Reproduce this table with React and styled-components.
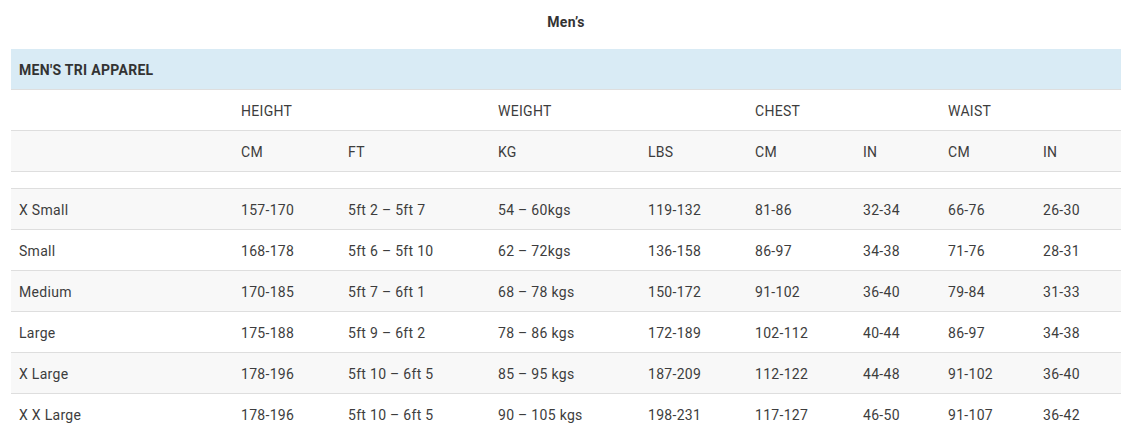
import React from "react";
import styled, { createGlobalStyle } from "styled-components";

const GlobalStyle = createGlobalStyle`
  body {
    margin: 0;
    background: #fff;
    font-family: Roboto, "Liberation Sans", sans-serif;
    color: #3a3a3a;
  }
`;

const columns = [222, 107, 150, 150, 107, 108, 85, 95, 86];

const groups = [
  { label: "HEIGHT", span: 2 },
  { label: "WEIGHT", span: 2 },
  { label: "CHEST", span: 2 },
  { label: "WAIST", span: 2 },
];

const units = ["CM", "FT", "KG", "LBS", "CM", "IN", "CM", "IN"];

const sizes = [
  ["X Small", "157-170", "5ft 2 – 5ft 7", "54 – 60kgs", "119-132", "81-86", "32-34", "66-76", "26-30"],
  ["Small", "168-178", "5ft 6 – 5ft 10", "62 – 72kgs", "136-158", "86-97", "34-38", "71-76", "28-31"],
  ["Medium", "170-185", "5ft 7 – 6ft 1", "68 – 78 kgs", "150-172", "91-102", "36-40", "79-84", "31-33"],
  ["Large", "175-188", "5ft 9 – 6ft 2", "78 – 86 kgs", "172-189", "102-112", "40-44", "86-97", "34-38"],
  ["X Large", "178-196", "5ft 10 – 6ft 5", "85 – 95 kgs", "187-209", "112-122", "44-48", "91-102", "36-40"],
  ["X X Large", "178-196", "5ft 10 – 6ft 5", "90 – 105 kgs", "198-231", "117-127", "46-50", "91-107", "36-42"],
];

const Page = styled.div`
  padding: 0 13px 0 11px;
  letter-spacing: 0.3px;
`;

const Title = styled.h2`
  margin: 0;
  height: 49px;
  line-height: 45px;
  text-align: center;
  font-size: 14px;
  font-weight: 700;
  color: #333;
`;

const Table = styled.table`
  width: 1110px;
  table-layout: fixed;
  border-collapse: collapse;
  font-size: 14px;
`;

const Row = styled.tr`
  background: ${(p) => (p.$shade ? "#f8f8f8" : "#fff")};
  border-top: 1px solid #dedede;
  &:first-child {
    border-top: none;
  }
`;

const Caption = styled.th`
  background: #d9ebf5;
  height: 38px;
  padding: 2px 8px 0;
  text-align: left;
  font-size: 14px;
  font-weight: 700;
  color: #333;
`;

const Cell = styled.td`
  height: ${(p) => (p.$gap ? "16px" : "38px")};
  padding: ${(p) => (p.$gap ? "0" : "2px 8px 0")};
  text-align: left;
  white-space: nowrap;
  color: #3d3d3d;
`;

export default function App() {
  return (
    <>
      <GlobalStyle />
      <Page>
        <Title>Men’s</Title>
        <Table>
          <colgroup>
            {columns.map((w, i) => (
              <col key={i} style={{ width: w }} />
            ))}
          </colgroup>
          <tbody>
            <Row>
              <Caption colSpan={9}>MEN'S TRI APPAREL</Caption>
            </Row>
            <Row>
              <Cell />
              {groups.map((g) => (
                <Cell key={g.label} colSpan={g.span}>
                  {g.label}
                </Cell>
              ))}
            </Row>
            <Row $shade>
              <Cell />
              {units.map((u, i) => (
                <Cell key={i}>{u}</Cell>
              ))}
            </Row>
            <Row>
              <Cell $gap colSpan={9} />
            </Row>
            {sizes.map((r, i) => (
              <Row key={r[0]} $shade={i % 2 === 0}>
                {r.map((v, j) => (
                  <Cell key={j}>{v}</Cell>
                ))}
              </Row>
            ))}
          </tbody>
        </Table>
      </Page>
    </>
  );
}
